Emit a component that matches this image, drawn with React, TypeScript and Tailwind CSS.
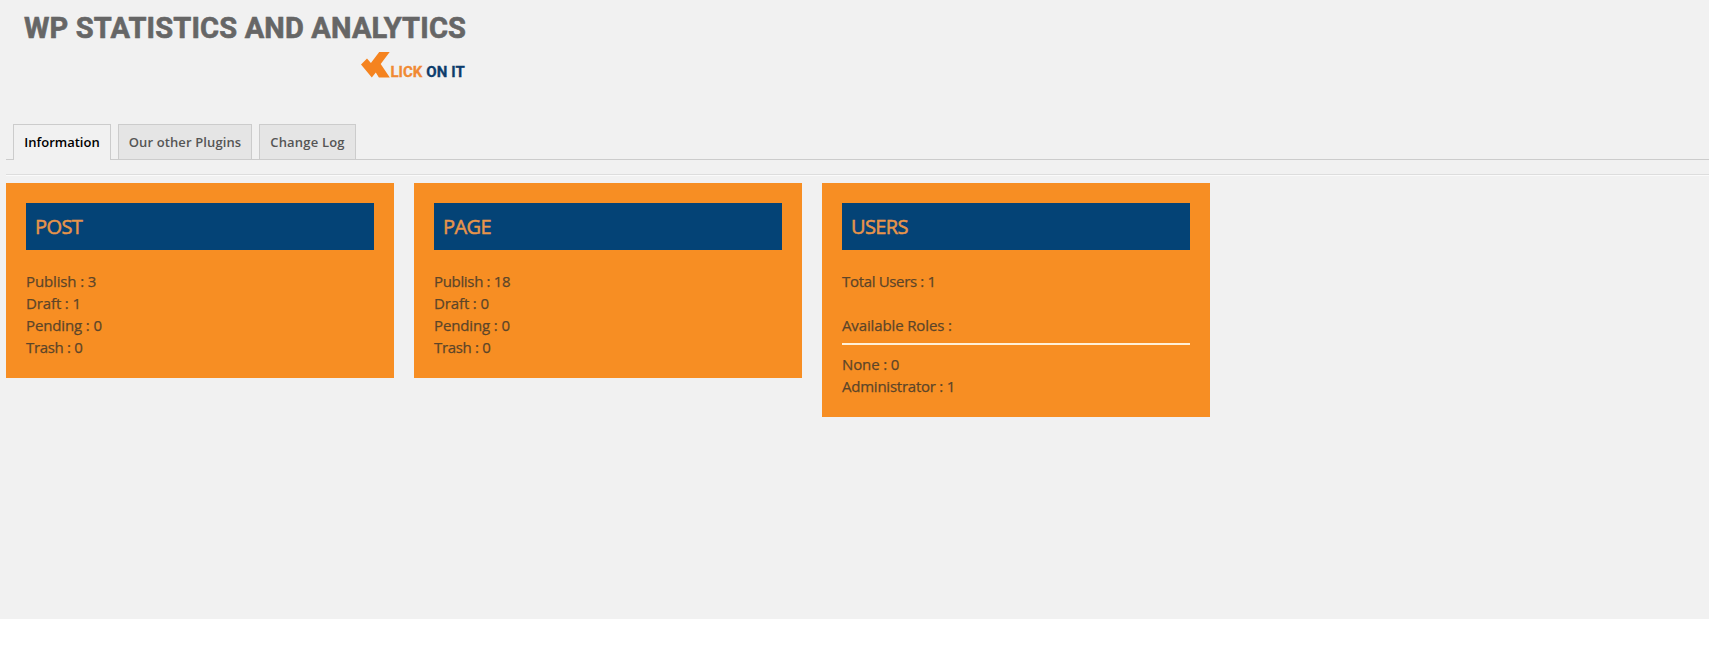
type Row = { text: string; track: string } | null;

const tabs = [
  { label: "Information", active: true, width: "w-[98px]", track: "tracking-[0px]" },
  { label: "Our other Plugins", active: false, width: "w-[134px]", track: "tracking-[0.12px]" },
  { label: "Change Log", active: false, width: "w-[97px]", track: "tracking-[0.2px]" },
];

const snug = "tracking-[-0.13px]";
const tight = "tracking-[-0.24px]";
const tighter = "tracking-[-0.33px]";

function Line({ row }: { row: Row }) {
  return <div className={`h-[22px] whitespace-pre ${row ? row.track : ""}`}>{row ? row.text : " "}</div>;
}

function Card({ title, rows, extra }: { title: string; rows: Row[]; extra?: Row[] }) {
  return (
    <section className="w-[388px] bg-[#f78e23] px-5 pt-5 pb-5">
      <h2 className="flex h-[47px] items-center bg-[#044376] pl-[9px] text-[20px] tracking-[-0.6px] text-[#e8954a] [-webkit-text-stroke:0.5px_#e8954a]">
        {title}
      </h2>
      <div className="pt-5 text-[15px] leading-[22px] text-[#5c4529] [-webkit-text-stroke:0.25px_#5c4529]">
        {rows.map((r, i) => (
          <Line key={i} row={r} />
        ))}
        {extra && (
          <>
            <hr className="mt-[7px] mb-[8px] h-[2px] border-0 bg-[#fff0d8]" />
            {extra.map((r, i) => (
              <Line key={i} row={r} />
            ))}
          </>
        )}
      </div>
    </section>
  );
}

export default function App() {
  return (
    <div className="h-[648px] w-full overflow-hidden bg-white font-['Open_Sans','Noto_Sans',sans-serif]">
      <div className="h-[619px] bg-[#f1f1f1] pl-[6px]">
        <header className="h-[124px] w-[460px] pt-[10px] pl-[18px] font-['Roboto',sans-serif] font-bold">
          <h1 className="h-[36px] text-[29px] leading-[36px] tracking-[0.18px] whitespace-nowrap text-[#666666] [-webkit-text-stroke:0.6px_#666666]">
            WP STATISTICS AND ANALYTICS
          </h1>
          <div className="mt-[5px] flex h-[28px] items-start pl-[336px]">
            <svg width="30" height="28" viewBox="360 51 30 28" className="shrink-0">
              <path
                d="M361 64.5L367 58.4L370.9 63L379.2 52.1H389.7L380.7 64L389.8 77.4H378.9L375.8 72.6L371.8 77.4Z"
                fill="#f5831f"
              />
            </svg>
            <div className="flex gap-[4px] pt-[11px] pl-[0.5px] text-[15px] leading-[20px] whitespace-nowrap">
              <span className="text-[#f08a33] [-webkit-text-stroke:0.3px_#f08a33]">LICK</span>
              <span className="text-[#0d3c6c] [-webkit-text-stroke:0.3px_#0d3c6c] tracking-[0.1px]">ON IT</span>
            </div>
          </div>
        </header>
        <nav className="flex h-[36px] items-end">
          <div className="h-full w-[7px] border-b border-[#cccccc]" />
          {tabs.map((t) => (
            <div key={t.label} className="flex h-full">
              <a
                className={`flex h-full items-center justify-center border-x border-t text-[13px] font-semibold whitespace-nowrap ${t.width} ${t.track} ${
                  t.active
                    ? "border-[#cccccc] bg-[#f1f1f1] text-black"
                    : "border-b border-[#cccccc] bg-[#e5e5e5] pt-px text-[#555555]"
                }`}
              >
                {t.label}
              </a>
              <div className="h-full w-[7px] border-b border-[#cccccc]" />
            </div>
          ))}
          <div className="h-full flex-1 border-b border-[#cccccc]" />
        </nav>
        <div className="mt-[14px] h-px bg-[#dddddd]" />
        <div className="h-px bg-[#fafafa]" />
        <main className="mt-[7px] flex items-start gap-5">
          <Card
            title="POST"
            rows={[
              { text: "Publish : 3", track: snug },
              { text: "Draft : 1", track: snug },
              { text: "Pending : 0", track: snug },
              { text: "Trash : 0", track: tighter },
            ]}
          />
          <Card
            title="PAGE"
            rows={[
              { text: "Publish : 18", track: tighter },
              { text: "Draft : 0", track: snug },
              { text: "Pending : 0", track: snug },
              { text: "Trash : 0", track: tighter },
            ]}
          />
          <Card
            title="USERS"
            rows={[
              { text: "Total Users : 1", track: tighter },
              null,
              { text: "Available Roles :", track: snug },
            ]}
            extra={[
              { text: "None : 0", track: snug },
              { text: "Administrator : 1", track: tight },
            ]}
          />
        </main>
      </div>
    </div>
  );
}
